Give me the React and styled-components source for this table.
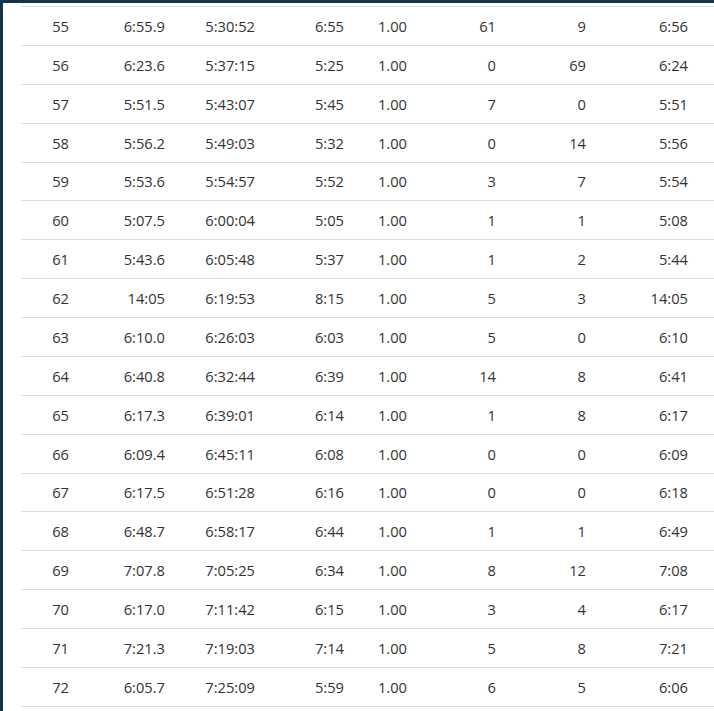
import React from "react";
import styled, { createGlobalStyle } from "styled-components";

const GlobalStyle = createGlobalStyle`
  html, body {
    margin: 0;
    padding: 0;
    background: #0f3551;
    overflow: hidden;
  }
`;

const Card = styled.div`
  margin: 3px 0 0 3px;
  padding: 3px 0 5px 18px;
  background: #fff;
  min-height: 708px;
  box-sizing: border-box;
  font-family: "Open Sans", "Liberation Sans", sans-serif;
  font-size: 14.7px;
  color: #333;
`;

const Table = styled.div`
  width: 720px;
  border-bottom: 1px solid #dddddd;
`;

const Row = styled.div`
  display: grid;
  grid-template-columns: 56px 96px 90px 89px 63px 89px 90px 102px 1fr;
  align-items: center;
  height: 38.89px;
  box-sizing: border-box;
  border-top: 1px solid #dddddd;
`;

const Cell = styled.div`
  text-align: right;
  padding-right: 8px;
  white-space: nowrap;
`;

const rows = [
  ["55", "6:55.9", "5:30:52", "6:55", "1.00", "61", "9", "6:56"],
  ["56", "6:23.6", "5:37:15", "5:25", "1.00", "0", "69", "6:24"],
  ["57", "5:51.5", "5:43:07", "5:45", "1.00", "7", "0", "5:51"],
  ["58", "5:56.2", "5:49:03", "5:32", "1.00", "0", "14", "5:56"],
  ["59", "5:53.6", "5:54:57", "5:52", "1.00", "3", "7", "5:54"],
  ["60", "5:07.5", "6:00:04", "5:05", "1.00", "1", "1", "5:08"],
  ["61", "5:43.6", "6:05:48", "5:37", "1.00", "1", "2", "5:44"],
  ["62", "14:05", "6:19:53", "8:15", "1.00", "5", "3", "14:05"],
  ["63", "6:10.0", "6:26:03", "6:03", "1.00", "5", "0", "6:10"],
  ["64", "6:40.8", "6:32:44", "6:39", "1.00", "14", "8", "6:41"],
  ["65", "6:17.3", "6:39:01", "6:14", "1.00", "1", "8", "6:17"],
  ["66", "6:09.4", "6:45:11", "6:08", "1.00", "0", "0", "6:09"],
  ["67", "6:17.5", "6:51:28", "6:16", "1.00", "0", "0", "6:18"],
  ["68", "6:48.7", "6:58:17", "6:44", "1.00", "1", "1", "6:49"],
  ["69", "7:07.8", "7:05:25", "6:34", "1.00", "8", "12", "7:08"],
  ["70", "6:17.0", "7:11:42", "6:15", "1.00", "3", "4", "6:17"],
  ["71", "7:21.3", "7:19:03", "7:14", "1.00", "5", "8", "7:21"],
  ["72", "6:05.7", "7:25:09", "5:59", "1.00", "6", "5", "6:06"],
];

export default function App() {
  return (
    <>
      <GlobalStyle />
      <Card>
        <Table>
          {rows.map((r) => (
            <Row key={r[0]}>
              {r.map((v, i) => (
                <Cell key={i}>{v}</Cell>
              ))}
              <Cell />
            </Row>
          ))}
        </Table>
      </Card>
    </>
  );
}
